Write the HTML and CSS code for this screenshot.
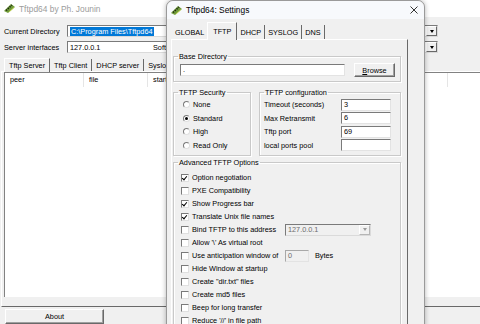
FILE: index.html
```html
<!DOCTYPE html>
<html lang="en">
<head>
    <meta charset="UTF-8">
    <title>Tftpd64</title>
    <link rel="stylesheet" href="styles.css">
</head>
<body>
    <!-- main window, sits behind the settings dialog -->
    <div class="main">
        <div class="titlebar main-title">
            <svg class="app-icon" width="13" height="11" viewBox="0 0 13 11">
                <path d="M1 8 L8 1 L12 4 L5 10 Z" fill="#6f9a3a"/>
                <path d="M3 7.5 L9 2" stroke="#1d2a10" stroke-width="1.6" stroke-dasharray="1.4 1"/>
                <path d="M6 9 L11 4.5" stroke="#c9d84a" stroke-width="0.8"/>
            </svg>
            <span>Tftpd64 by Ph. Jounin</span>
        </div>

        <div class="main-body">
            <div class="field-row">
                <label>Current Directory</label>
                <div class="combo">
                    <span class="combo-text"><span class="sel">C:\Program Files\Tftpd64</span></span>
                    <span class="combo-btn"><span class="arrow"></span></span>
                </div>
            </div>
            <div class="field-row">
                <label>Server interfaces</label>
                <div class="combo">
                    <span class="combo-text combo-ip">127.0.0.1</span>
                    <span class="combo-text">Software Loopback Interface 1</span>
                    <span class="combo-btn"><span class="arrow"></span></span>
                </div>
            </div>

            <div class="tabs main-tabs">
                <span class="tab active">Tftp Server</span>
                <span class="tab">Tftp Client</span>
                <span class="tab">DHCP server</span>
                <span class="tab">Syslog s</span>
            </div>
            <div class="main-panel">
                <div class="list">
                    <div class="list-head">
                        <span class="col col-peer">peer</span>
                        <span class="col col-file">file</span>
                        <span class="col col-start">start time</span>
                    </div>
                </div>
            </div>

            <div class="bottom-row">
                <button class="btn about-btn">About</button>
            </div>
        </div>
    </div>

    <!-- settings dialog -->
    <div class="dialog">
        <div class="titlebar dlg-title">
            <svg class="app-icon" width="13" height="11" viewBox="0 0 13 11">
                <path d="M1 8 L8 1 L12 4 L5 10 Z" fill="#6f9a3a"/>
                <path d="M3 7.5 L9 2" stroke="#1d2a10" stroke-width="1.6" stroke-dasharray="1.4 1"/>
                <path d="M6 9 L11 4.5" stroke="#c9d84a" stroke-width="0.8"/>
            </svg>
            <span class="dlg-name">Tftpd64: Settings</span>
            <svg class="close" width="8" height="8" viewBox="0 0 8 8">
                <path d="M0.5 0.5 L7.5 7.5 M7.5 0.5 L0.5 7.5" stroke="#333" stroke-width="1"/>
            </svg>
        </div>

        <div class="dlg-body">
            <div class="tabs dlg-tabs">
                <span class="tab plain">GLOBAL</span>
                <span class="tab active">TFTP</span>
                <span class="tab">DHCP</span>
                <span class="tab">SYSLOG</span>
                <span class="tab">DNS</span>
            </div>

            <div class="dlg-panel">
                <fieldset class="group base-group">
                    <legend>Base Directory</legend>
                    <div class="base-row">
                        <span class="edit base-edit">.</span>
                        <button class="btn browse-btn"><u>B</u>rowse</button>
                    </div>
                </fieldset>

                <div class="group-row">
                    <fieldset class="group security-group">
                        <legend>TFTP Security</legend>
                        <div class="opt-rows">
                            <div class="opt"><span class="radio"></span>None</div>
                            <div class="opt"><span class="radio on"></span>Standard</div>
                            <div class="opt"><span class="radio"></span>High</div>
                            <div class="opt"><span class="radio"></span>Read Only</div>
                        </div>
                    </fieldset>

                    <fieldset class="group config-group">
                        <legend>TFTP configuration</legend>
                        <div class="opt-rows">
                            <div class="opt"><span class="cfg-label">Timeout (seconds)</span><span class="edit cfg-edit">3</span></div>
                            <div class="opt"><span class="cfg-label">Max Retransmit</span><span class="edit cfg-edit">6</span></div>
                            <div class="opt"><span class="cfg-label">Tftp port</span><span class="edit cfg-edit">69</span></div>
                            <div class="opt"><span class="cfg-label">local ports pool</span><span class="edit cfg-edit"></span></div>
                        </div>
                    </fieldset>
                </div>

                <fieldset class="group adv-group">
                    <legend>Advanced TFTP Options</legend>
                    <div class="check-rows">
                        <div class="check"><span class="box on"></span>Option negotiation</div>
                        <div class="check"><span class="box"></span>PXE Compatibility</div>
                        <div class="check"><span class="box on"></span>Show Progress bar</div>
                        <div class="check"><span class="box on"></span>Translate Unix file names</div>
                        <div class="check">
                            <span class="box"></span><span class="check-label">Bind TFTP to this address</span>
                            <span class="combo disabled bind-combo">
                                <span class="combo-text">127.0.0.1</span>
                                <span class="combo-btn"><span class="arrow"></span></span>
                            </span>
                        </div>
                        <div class="check"><span class="box"></span>Allow '\' As virtual root</div>
                        <div class="check">
                            <span class="box"></span><span class="check-label">Use anticipation window of</span>
                            <span class="edit disabled window-edit">0</span>
                            <span class="bytes">Bytes</span>
                        </div>
                        <div class="check"><span class="box"></span>Hide Window at startup</div>
                        <div class="check"><span class="box"></span>Create "dir.txt" files</div>
                        <div class="check"><span class="box"></span>Create md5 files</div>
                        <div class="check"><span class="box"></span>Beep for long transfer</div>
                        <div class="check"><span class="box"></span>Reduce '//' in file path</div>
                    </div>
                </fieldset>
            </div>
        </div>
    </div>
</body>
</html>
```

FILE: styles.css
```css
:root {
    --face: #f0f0f0;
    --shadow: #a0a0a0;
    --dark: #696969;
    --edge: #7a7a7a;
    --select: #0078d7;
    --grey-text: #6d6d6d;
}

body {
    margin: 0;
    width: 480px;
    height: 324px;
    overflow: hidden;
    position: relative;
    background: var(--face);
    font-family: "Liberation Sans", Arial, sans-serif;
    font-size: 7.3px;
    color: #000;
}

/* ---------- shared widgets ---------- */

.titlebar {
    display: flex;
    align-items: center;
    gap: 3px;
    font-size: 8.4px;
}

.app-icon {
    flex: none;
}

.combo {
    display: flex;
    align-items: center;
    box-sizing: border-box;
    height: 12px;
    background: #fff;
    border: 1px solid;
    border-color: var(--edge) #dadada #dadada var(--edge);
}

.combo-text {
    padding-left: 2px;
    white-space: nowrap;
    overflow: hidden;
    flex: 1;
}

.combo-btn {
    flex: none;
    width: 11px;
    height: 10px;
    box-sizing: border-box;
    display: flex;
    align-items: center;
    justify-content: center;
    background: var(--face);
    border: 1px solid;
    border-color: #fff var(--dark) var(--dark) #fff;
}

.arrow {
    width: 0;
    height: 0;
    border-left: 2.5px solid transparent;
    border-right: 2.5px solid transparent;
    border-top: 3px solid #000;
}

.edit {
    box-sizing: border-box;
    height: 12px;
    line-height: 10px;
    padding-left: 2px;
    background: #fff;
    border: 1px solid;
    border-color: var(--edge) #e3e3e3 #e3e3e3 var(--edge);
}

.disabled {
    background: var(--face);
    color: var(--grey-text);
}

.disabled .arrow {
    border-top-color: #9a9a9a;
}

.btn {
    box-sizing: border-box;
    margin: 0;
    padding: 0;
    font: inherit;
    color: #000;
    background: var(--face);
    border: 1px solid;
    border-color: #fff var(--dark) var(--dark) #fff;
    box-shadow: inset -1px -1px var(--shadow);
}

.tabs {
    display: flex;
    align-items: flex-end;
}

.tab {
    box-sizing: border-box;
    display: flex;
    align-items: center;
    padding: 0 3px;
    border-right: 1px solid var(--dark);
    white-space: nowrap;
}

.tab.plain {
    border-right: none;
}

.tab.active {
    background: var(--face);
    border-top: 1px solid #fff;
    border-left: 1px solid #fff;
    margin-bottom: -1px;
    position: relative;
    z-index: 1;
}

/* ---------- main window ---------- */

.main {
    display: flex;
    flex-direction: column;
    height: 324px;
}

.main-title {
    height: 17px;
    padding-left: 3px;
    background: #fff;
    color: #9c9c9c;
}

.main-body {
    flex: 1;
    display: flex;
    flex-direction: column;
    padding-top: 8px;
}

.field-row {
    display: flex;
    align-items: center;
    height: 12px;
    margin-bottom: 4px;
    padding-left: 4px;
}

.field-row label {
    width: 63px;
    flex: none;
}

.field-row .combo {
    width: 371px;
}

.sel {
    background: var(--select);
    color: #fff;
    padding: 0 1px;
}

.combo-ip {
    flex: none;
    width: 81px;
}

.main-tabs {
    height: 14px;
    padding-left: 4px;
}

.main-tabs .tab {
    height: 12px;
    padding: 0 4px;
}

.main-tabs .tab.active {
    height: 14px;
}

.main-panel {
    height: 236px;
    margin-left: 1px;
    padding-left: 2px;
    box-sizing: border-box;
    border-top: 1px solid #fff;
    border-left: 1px solid #fff;
    border-bottom: 1px solid var(--dark);
}

.list {
    height: 224px;
    background: #fff;
    border-top: 1px solid #828282;
    border-left: 1px solid #828282;
}

.list-head {
    display: flex;
    height: 14px;
    align-items: center;
}

.col {
    box-sizing: border-box;
    padding-left: 5px;
    border-right: 1px solid #e5e5e5;
    height: 14px;
    line-height: 14px;
}

.col-peer { width: 79px; }
.col-file { width: 64px; }
.col-start { width: 300px; }

.bottom-row {
    padding: 2px 0 0 5px;
}

.about-btn {
    width: 99px;
    height: 15px;
}

/* ---------- settings dialog ---------- */

.dialog {
    position: absolute;
    left: 166px;
    top: 0;
    width: 259px;
    height: 330px;
    box-sizing: border-box;
    background: var(--face);
    border: 1px solid #9a9a9a;
    border-radius: 7px 7px 0 0;
    box-shadow: 0 0 5px rgba(0, 0, 0, 0.3);
}

.dlg-title {
    height: 18px;
    padding-left: 3px;
    background: #f7f9fc;
    border-radius: 7px 7px 0 0;
}

.dlg-name {
    flex: 1;
}

.close {
    margin-right: 6px;
}

.dlg-body {
    padding: 3px 16px 0 4px;
}

.dlg-tabs {
    height: 17px;
    padding-left: 1px;
}

.dlg-tabs .tab {
    height: 14px;
    padding: 0 3px;
}

.dlg-tabs .tab.active {
    height: 18px;
    padding: 0 5px;
}

.dlg-panel {
    height: 290px;
    box-sizing: border-box;
    padding: 0 6px 0 1px;
    border: 1px solid;
    border-color: #fff var(--dark) var(--dark) #fff;
}

.group {
    margin: 0;
    padding: 0 4px;
    border: 1px solid #c9c9c9;
    box-shadow: inset 1px 1px #fff, 1px 1px #fff;
}

.group legend {
    padding: 0 1px;
    line-height: 9px;
}

.base-group {
    margin-top: 12px;
    padding-bottom: 4px;
}

.base-row {
    display: flex;
    align-items: center;
    gap: 9px;
    margin-top: 2px;
    padding-left: 2px;
}

.base-edit {
    width: 165px;
}

.browse-btn {
    width: 41px;
    height: 14px;
}

.group-row {
    display: flex;
    gap: 8px;
    margin-top: 6px;
}

.security-group {
    width: 78px;
    box-sizing: border-box;
    padding-bottom: 3px;
}

.config-group {
    flex: 1;
}

.opt-rows {
    margin-top: 1px;
}

.opt {
    display: flex;
    align-items: center;
    height: 13.5px;
}

.security-group .opt {
    padding-left: 5px;
    gap: 3px;
}

.radio {
    width: 7px;
    height: 7px;
    box-sizing: border-box;
    border-radius: 50%;
    background: #fff;
    border: 1px solid;
    border-color: #7a7a7a #e0e0e0 #e0e0e0 #7a7a7a;
    display: flex;
    align-items: center;
    justify-content: center;
}

.radio.on::after {
    content: "";
    width: 3px;
    height: 3px;
    border-radius: 50%;
    background: #000;
}

.cfg-label {
    width: 77px;
}

.cfg-edit {
    width: 50px;
}

.adv-group {
    margin-top: 2px;
}

.check-rows {
    margin-top: 4px;
    padding-left: 3px;
}

.check {
    display: flex;
    align-items: center;
    gap: 3px;
    height: 13px;
    white-space: nowrap;
}

.box {
    flex: none;
    width: 8px;
    height: 8px;
    box-sizing: border-box;
    background: #fff;
    border: 1px solid;
    border-color: #7a7a7a #e0e0e0 #e0e0e0 #7a7a7a;
    position: relative;
}

.box.on::after {
    content: "";
    position: absolute;
    left: 1px;
    top: 0;
    width: 2px;
    height: 4px;
    border: solid #000;
    border-width: 0 1.3px 1.3px 0;
    transform: rotate(40deg);
}

.check-label {
    width: 90px;
}

.bind-combo {
    width: 86px;
}

.bind-combo .combo-btn {
    border-color: #fff #b5b5b5 #b5b5b5 #fff;
}

.window-edit {
    width: 24px;
    border-color: #a8a8a8 #e3e3e3 #e3e3e3 #a8a8a8;
}

.bytes {
    margin-left: 3px;
}
```
